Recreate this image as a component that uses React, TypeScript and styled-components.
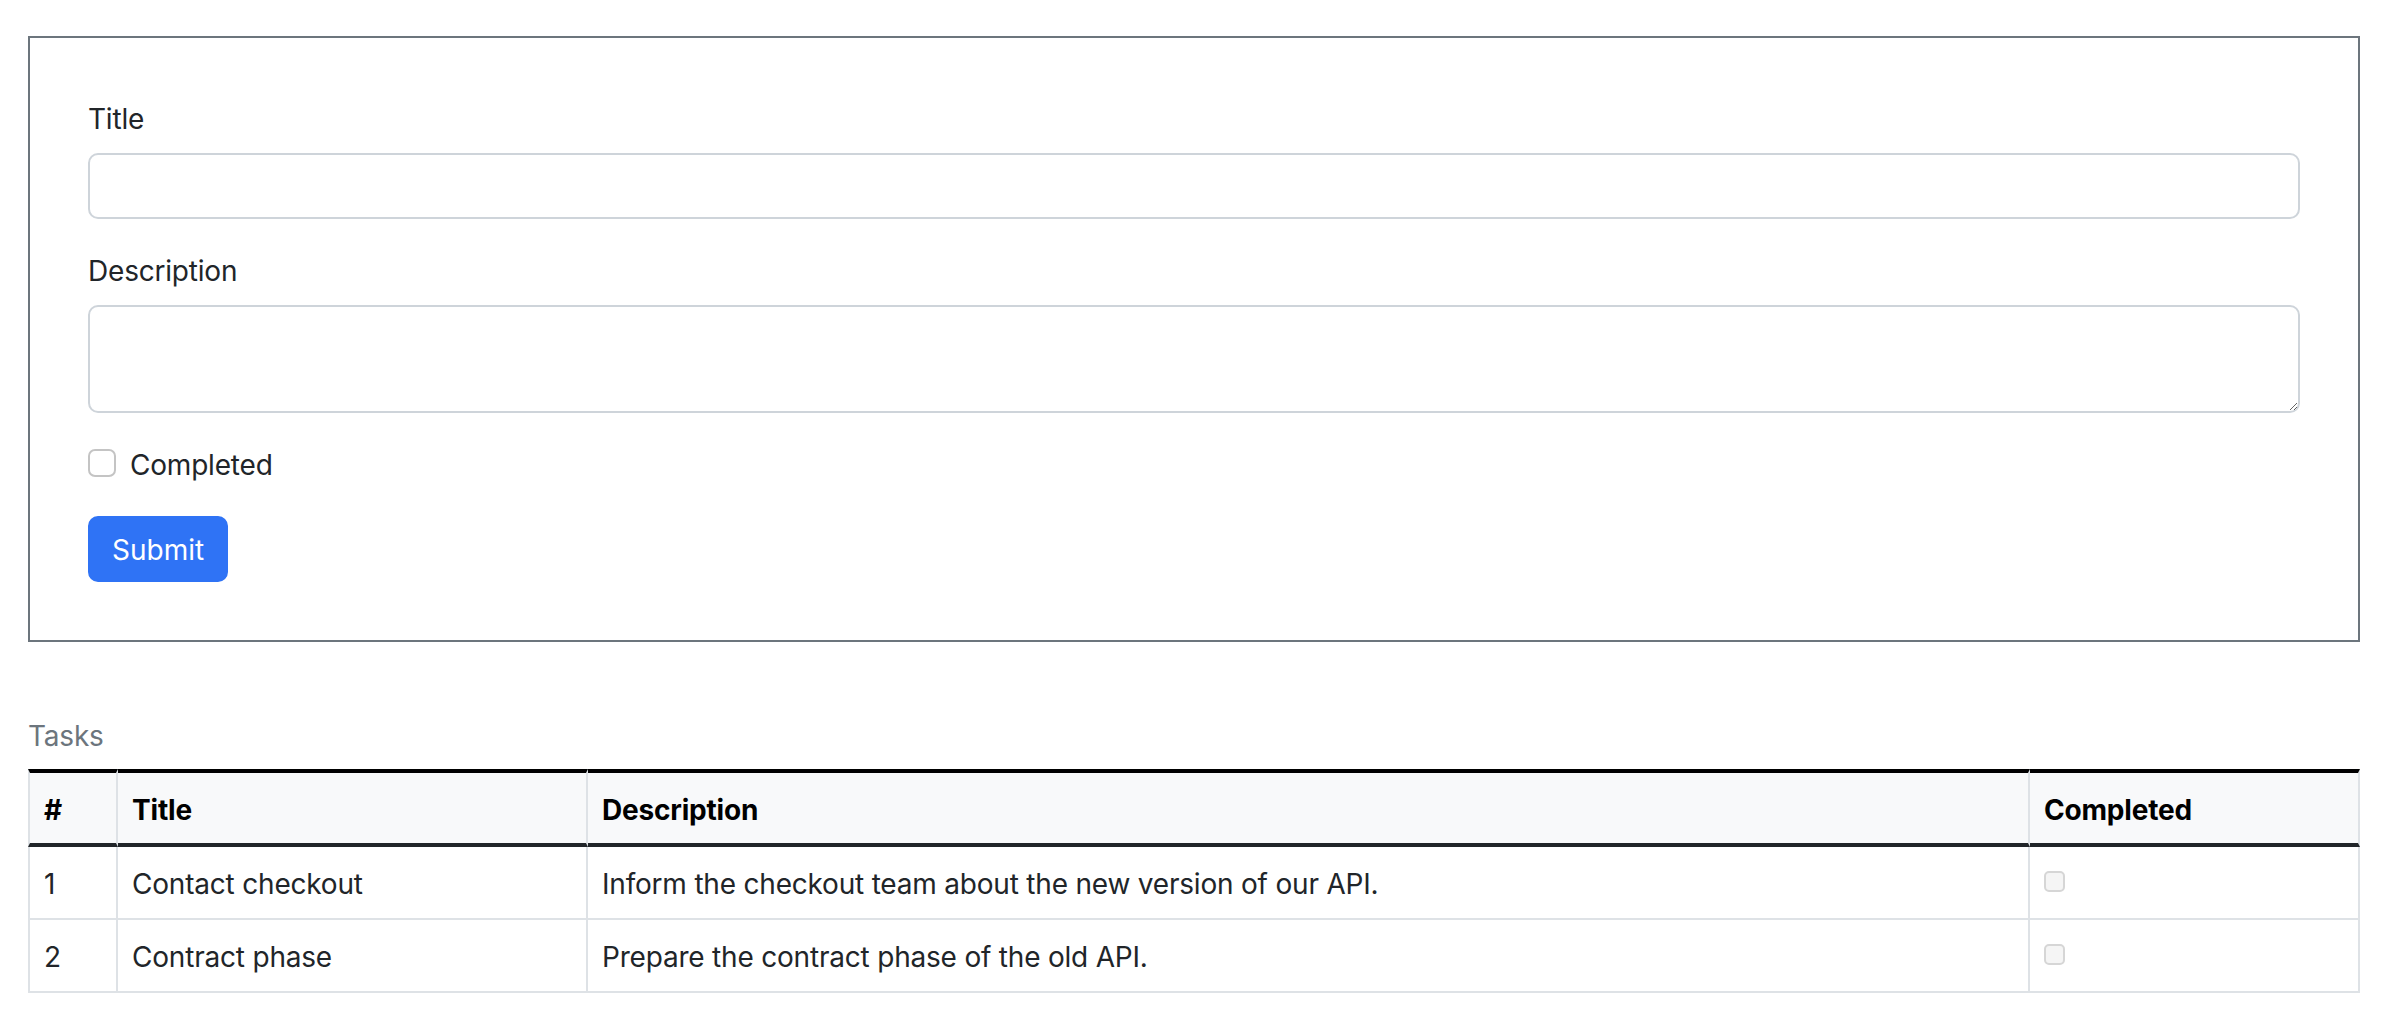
import React from "react";
import styled, { createGlobalStyle } from "styled-components";

const GlobalStyle = createGlobalStyle`
  *, *::before, *::after { box-sizing: border-box; }
  html, body { margin: 0; padding: 0; background: #ffffff; }
  body {
    font-family: Inter, "Noto Sans", "Liberation Sans", sans-serif;
    font-size: 28px;
    line-height: 42px;
    letter-spacing: -0.2px;
    color: #212529;
  }
`;

const Page = styled.main`
  padding: 36px 30px 40px 28px;
`;

const FormCard = styled.form`
  border: 2px solid #6c757d;
  padding: 58px 58px 58px 58px;
`;

const Field = styled.div`
  margin-bottom: 29px;
`;

const Label = styled.label`
  display: block;
  padding-top: 2px;
  margin-bottom: 13px;
  line-height: 42px;
`;

const TextInput = styled.input`
  display: block;
  width: 100%;
  height: 66px;
  padding: 10px 21px;
  font: inherit;
  color: #212529;
  background: #fff;
  border: 2px solid #ced4da;
  border-radius: 10px;
  outline: none;
`;

const TextArea = styled.textarea`
  display: block;
  width: 100%;
  height: 108px;
  padding: 10px 21px;
  font: inherit;
  color: #212529;
  background: #fff;
  border: 2px solid #ced4da;
  border-radius: 10px;
  resize: vertical;
  outline: none;
`;

const CheckRow = styled.div`
  display: flex;
  align-items: center;
  gap: 14px;
  margin-top: 6px;
  margin-bottom: 32px;
  height: 42px;
`;

const CheckLabel = styled.label`
  padding-top: 3px;
`;

const FormCheckbox = styled.input.attrs({ type: "checkbox" })`
  appearance: none;
  margin: 0;
  width: 28px;
  height: 28px;
  border: 2px solid #c4c4c4;
  border-radius: 7px;
  background: #fff;
  flex: none;
`;

const SubmitButton = styled.button`
  display: block;
  height: 66px;
  padding: 2px 22px 0;
  font: inherit;
  color: #ffffff;
  background: #2f73f5;
  border: 2px solid #2f73f5;
  border-radius: 10px;
`;

const TasksSection = styled.section`
  margin-top: 58px;
`;

const Table = styled.table`
  width: 100%;
  table-layout: fixed;
  border-collapse: separate;
  border-spacing: 0;
`;

const Caption = styled.caption`
  caption-side: top;
  text-align: left;
  color: #6c757d;
  padding: 15px 0 12px;
`;

const HeadCell = styled.th<{ $w: number; $first?: boolean }>`
  width: ${(p) => p.$w}px;
  text-align: left;
  font-weight: 700;
  color: #000;
  background: #f8f9fa;
  padding: 16px 14px 12px;
  border-top: 4px solid #000;
  border-bottom: 4px solid #212529;
  border-right: 2px solid #dee2e6;
  border-left: ${(p) => (p.$first ? "2px solid #dee2e6" : "none")};
`;

const Cell = styled.td<{ $first?: boolean }>`
  padding: 16px 14px 13px;
  vertical-align: top;
  color: #212529;
  border-bottom: 2px solid #dee2e6;
  border-right: 2px solid #dee2e6;
  border-left: ${(p) => (p.$first ? "2px solid #dee2e6" : "none")};
`;

const RowCheckbox = styled.input.attrs({ type: "checkbox", disabled: true })`
  appearance: none;
  display: block;
  margin: 8px 0 0 0;
  width: 21px;
  height: 21px;
  border: 2px solid #d6d6d6;
  border-radius: 5px;
  background: #f5f5f5;
`;

const tasks = [
  {
    id: 1,
    title: "Contact checkout",
    description: "Inform the checkout team about the new version of our API.",
    completed: false,
  },
  {
    id: 2,
    title: "Contract phase",
    description: "Prepare the contract phase of the old API.",
    completed: false,
  },
];

export default function App() {
  return (
    <>
      <GlobalStyle />
      <Page>
        <FormCard onSubmit={(e) => e.preventDefault()}>
          <Field>
            <Label htmlFor="title">Title</Label>
            <TextInput id="title" type="text" />
          </Field>
          <Field>
            <Label htmlFor="description">Description</Label>
            <TextArea id="description" />
          </Field>
          <CheckRow>
            <FormCheckbox id="completed" />
            <CheckLabel htmlFor="completed">Completed</CheckLabel>
          </CheckRow>
          <SubmitButton type="submit">Submit</SubmitButton>
        </FormCard>

        <TasksSection>
          <Table>
            <Caption>Tasks</Caption>
            <thead>
              <tr>
                <HeadCell $w={90} $first>
                  #
                </HeadCell>
                <HeadCell $w={470}>Title</HeadCell>
                <HeadCell $w={1442}>Description</HeadCell>
                <HeadCell $w={330}>Completed</HeadCell>
              </tr>
            </thead>
            <tbody>
              {tasks.map((t) => (
                <tr key={t.id}>
                  <Cell $first>{t.id}</Cell>
                  <Cell>{t.title}</Cell>
                  <Cell>{t.description}</Cell>
                  <Cell>
                    <RowCheckbox checked={t.completed} readOnly />
                  </Cell>
                </tr>
              ))}
            </tbody>
          </Table>
        </TasksSection>
      </Page>
    </>
  );
}
